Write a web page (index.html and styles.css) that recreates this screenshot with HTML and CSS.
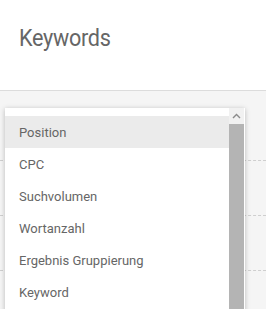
FILE: index.html
```html
<!DOCTYPE html>
<html lang="de">
<head>
    <meta charset="UTF-8">
    <title>Keywords</title>
    <link rel="stylesheet" href="styles.css">
</head>
<body>
    <header class="page-header">
        <h1>Keywords</h1>
    </header>
    <main class="content">
        <div class="table">
            <div class="row"></div>
            <div class="row"></div>
            <div class="row"></div>
        </div>
        <div class="dropdown">
            <ul class="options">
                <li class="active">Position</li>
                <li>CPC</li>
                <li>Suchvolumen</li>
                <li>Wortanzahl</li>
                <li>Ergebnis Gruppierung</li>
                <li>Keyword</li>
            </ul>
            <div class="scrollbar">
                <span class="arrow">
                    <svg width="9" height="6" viewBox="0 0 9 6"><path d="M1 5 L4.5 1.5 L8 5" fill="none" stroke="#8a8a8a" stroke-width="1.4"/></svg>
                </span>
                <span class="thumb"></span>
            </div>
        </div>
    </main>
</body>
</html>
```

FILE: styles.css
```css
body {
    margin: 0;
    font-family: Roboto, 'Liberation Sans', sans-serif;
    color: #666;
    background: #f5f5f5;
}

.page-header {
    height: 90px;
    background: #fff;
    border-bottom: 1px solid #dcdcdc;
    padding-left: 19px;
}

.page-header h1 {
    margin: 0;
    padding-top: 24px;
    font-size: 24px;
    font-weight: 400;
    line-height: 28px;
    letter-spacing: -0.3px;
    transform: scaleX(0.9);
    transform-origin: left;
    color: #666;
}

.content {
    position: relative;
    height: 218px;
    padding-top: 15px;
    overflow: hidden;
}

.row {
    height: 54px;
    border-bottom: 1px dashed #cfcfcf;
}

.dropdown {
    position: absolute;
    left: 5px;
    top: 17px;
    width: 240px;
    height: 220px;
    display: flex;
    background: #fff;
    box-shadow: 0 1px 5px rgba(0, 0, 0, 0.25);
}

.options {
    flex: 1;
    list-style: none;
    margin: 0;
    padding: 8px 0 0;
}

.options li {
    height: 32px;
    line-height: 33px;
    padding-left: 14px;
    font-size: 13px;
}

.options li.active {
    background: #ebebeb;
}

.scrollbar {
    width: 15px;
    margin-right: 1px;
    display: flex;
    flex-direction: column;
    background: #f1f1f1;
}

.arrow {
    height: 16px;
    display: flex;
    align-items: center;
    justify-content: center;
}

.thumb {
    flex: 1;
    background: #b4b4b4;
}
```
